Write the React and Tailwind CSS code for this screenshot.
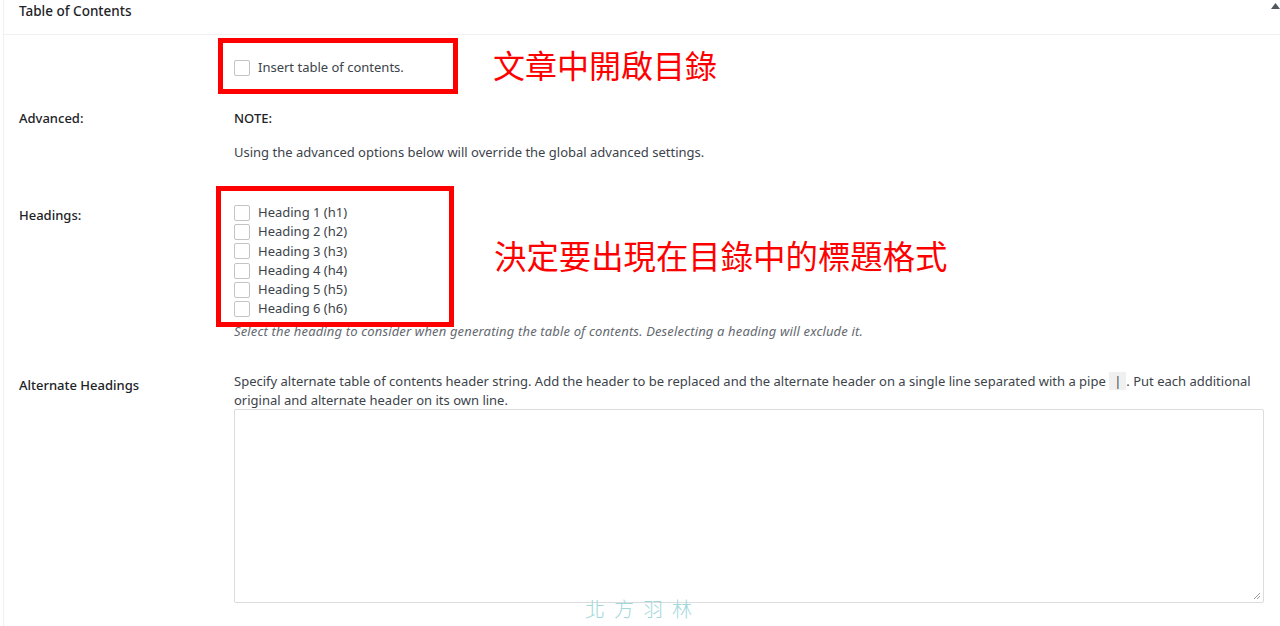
import React from "react";

const font = { fontFamily: '"Noto Sans", "Noto Sans CJK TC", sans-serif' };

function Box() {
  return <span className="inline-block w-4 h-4 border border-[#c3c4c7] rounded-[2px] bg-white shrink-0" />;
}

export default function App() {
  const headings = [1, 2, 3, 4, 5, 6];
  return (
    <div className="relative w-[1280px] h-[626px] overflow-hidden bg-white text-[13px] text-[#3c434a]" style={font}>
      <div className="ml-[3px] border-l border-[#f0f0f1] h-full">
        <div className="h-[35px] border-b border-[#f0f0f1] pl-[15px] pt-[1px] text-[13.5px] font-medium text-[#1d2327] leading-[20px]">
          Table of Contents
        </div>
        <div className="pl-[15px] pr-[16px]">
          <div className="flex mt-[25px]">
            <div className="w-[215px]" />
            <label className="flex items-center gap-2 h-4">
              <Box />
              <span>Insert table of contents.</span>
            </label>
          </div>
          <div className="flex mt-[32px] leading-[20px]">
            <div className="w-[215px] font-medium text-[#1d2327]">Advanced:</div>
            <div>
              <div className="font-medium text-[#1d2327]">NOTE:</div>
              <div className="mt-[14px]">Using the advanced options below will override the global advanced settings.</div>
            </div>
          </div>
          <div className="flex mt-[41px]">
            <div className="w-[215px] pt-[2px] leading-[20px] font-medium text-[#1d2327]">Headings:</div>
            <div>
              {headings.map((n) => (
                <label key={n} className="flex items-center gap-2 h-[19.3px]">
                  <Box />
                  <span>Heading {n} (h{n})</span>
                </label>
              ))}
              <div className="mt-[2px] leading-[20px] italic text-[#646970] tracking-[0.15px]">
                Select the heading to consider when generating the table of contents. Deselecting a heading will exclude it.
              </div>
            </div>
          </div>
          <div className="flex mt-[31px]">
            <div className="w-[215px] pt-[3px] leading-[20px] font-medium text-[#1d2327]">Alternate Headings</div>
            <div className="flex-1">
              <div className="leading-[19px]">
                Specify alternate table of contents header string. Add the header to be replaced and the alternate header on a single line separated with a pipe{" "}
                <code className="bg-[#f0f0f1] px-[5px] text-[13px] text-[#3c434a]" style={font}>|</code>. Put each additional original and alternate header on its own line.
              </div>
              <div className="relative mt-[-1px] h-[194px] border border-[#dcdcde] rounded-[2px]">
                <svg className="absolute right-[2px] bottom-[2px]" width="9" height="9" viewBox="0 0 9 9">
                  <path d="M8 2 L2 8 M8 5 L5 8" stroke="#999" strokeWidth="1" />
                </svg>
              </div>
            </div>
          </div>
        </div>
      </div>

      {/* header toggle arrow */}
      <svg className="absolute right-[0px] top-[1px]" width="9" height="8" viewBox="0 0 9 8">
        <path d="M0 8 L4.5 2 L9 8 Z" fill="#50575e" />
      </svg>

      {/* annotations */}
      <div className="absolute left-[218px] top-[38px] w-[240px] h-[56px] border-[5px] border-[#ff0000]" />
      <div className="absolute left-[216px] top-[186px] w-[238px] h-[141px] border-[5px] border-[#ff0000]" />
      <div className="absolute left-[493px] top-[45px] text-[32px] leading-[38px] text-[#ff0000]" style={{ fontFamily: '"Noto Sans CJK TC", sans-serif' }}>
        文章中開啟目錄
      </div>
      <div className="absolute left-[494px] top-[236px] text-[32.4px] leading-[38px] text-[#ff0000]" style={{ fontFamily: '"Noto Sans CJK TC", sans-serif' }}>
        決定要出現在目錄中的標題格式
      </div>
      <div className="absolute left-[585px] top-[595px] text-[20px] leading-[28px] tracking-[9px] text-[#9fd8db]" style={{ fontFamily: '"Noto Sans CJK TC", sans-serif', fontWeight: 300 }}>
        北方羽林
      </div>
    </div>
  );
}
